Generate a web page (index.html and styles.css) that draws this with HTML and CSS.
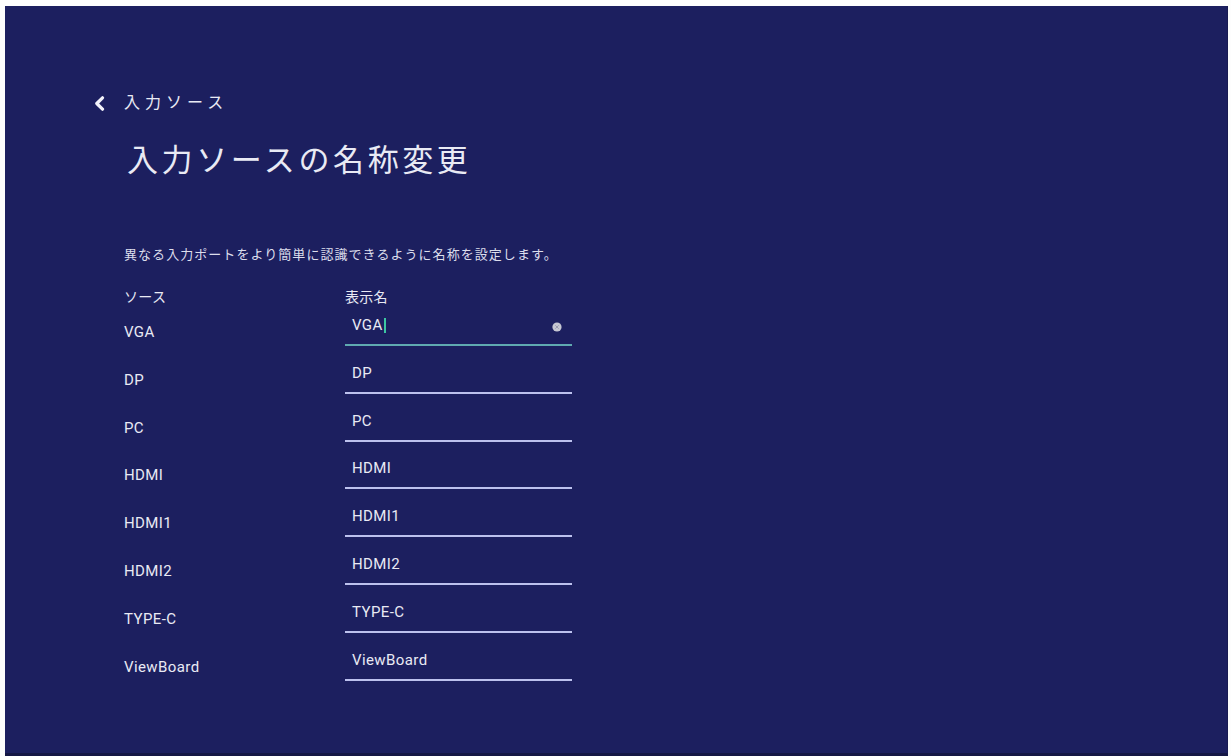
FILE: index.html
```html
<!doctype html>
<html lang="ja">
    <head>
        <meta charset="utf8">
        <link rel="stylesheet" href="styles.css">
    </head>
    <body>
        <main class="screen">
            <div class="back">
                <svg class="chevron" width="11" height="15" viewBox="0 0 11 15">
                    <polyline points="8.5,1.8 2.8,7.5 8.5,13.2" fill="none" stroke="#f2f2fa" stroke-width="3.2" stroke-linecap="round" stroke-linejoin="round"/>
                </svg>
                <span class="back-label">入力ソース</span>
            </div>
            <div class="content">
                <h1 class="title">入力ソースの名称変更</h1>
                <p class="hint">異なる入力ポートをより簡単に認識できるように名称を設定します。</p>
                <div class="head">
                    <span class="col-source">ソース</span>
                    <span>表示名</span>
                </div>
                <ul class="sources">
                    <li class="source">
                        <span class="source-name">VGA</span>
                        <div class="field focused">
                            <span class="value">VGA</span><span class="caret"></span>
                            <svg class="clear" width="10" height="10" viewBox="0 0 10 10">
                                <circle cx="5" cy="5" r="4.6" fill="#c6c7d3"/>
                                <path d="M3.3 3.3 6.7 6.7M6.7 3.3 3.3 6.7" stroke="#9a9bb0" stroke-width="1"/>
                            </svg>
                        </div>
                    </li>
                    <li class="source">
                        <span class="source-name">DP</span>
                        <div class="field"><span class="value">DP</span></div>
                    </li>
                    <li class="source">
                        <span class="source-name">PC</span>
                        <div class="field"><span class="value">PC</span></div>
                    </li>
                    <li class="source">
                        <span class="source-name">HDMI</span>
                        <div class="field"><span class="value">HDMI</span></div>
                    </li>
                    <li class="source">
                        <span class="source-name">HDMI1</span>
                        <div class="field"><span class="value">HDMI1</span></div>
                    </li>
                    <li class="source">
                        <span class="source-name">HDMI2</span>
                        <div class="field"><span class="value">HDMI2</span></div>
                    </li>
                    <li class="source">
                        <span class="source-name">TYPE-C</span>
                        <div class="field"><span class="value">TYPE-C</span></div>
                    </li>
                    <li class="source">
                        <span class="source-name">ViewBoard</span>
                        <div class="field"><span class="value">ViewBoard</span></div>
                    </li>
                </ul>
            </div>
        </main>
    </body>
</html>
```

FILE: styles.css
```css
html {
    height: 100%;
}
body {
    background-color: #fdfdfd;
    box-sizing: border-box;
    color: #e9eaf4;
    font-family: Roboto, "Noto Sans CJK JP", sans-serif;
    height: 100%;
    margin: 0;
    overflow: hidden;
    padding: 6px 3px 0 5px;
}
.screen {
    background-color: #1c1f5f;
    border-bottom: 3px solid #151745;
    border-right: 1px solid #181a52;
    box-sizing: border-box;
    height: 100%;
    padding: 86px 0 0 89px;
}
.back {
    align-items: center;
    display: flex;
    height: 22px;
}
.chevron {
    display: block;
    margin-right: 19px;
}
.back-label {
    font-size: 16px;
    letter-spacing: 5px;
    line-height: 22px;
}
.content {
    padding-left: 30px;
}
.title {
    font-size: 31px;
    font-weight: normal;
    letter-spacing: 3.6px;
    line-height: 46px;
    margin: 24px 0 0;
    padding-left: 3px;
}
.hint {
    color: #dcdeec;
    font-size: 13px;
    letter-spacing: 1.05px;
    line-height: 18px;
    margin: 62px 0 0;
}
.head {
    display: flex;
    font-size: 14px;
    letter-spacing: 0.3px;
    line-height: 18px;
    margin-top: 24px;
}
.col-source {
    width: 221px;
}
.sources {
    display: flex;
    flex-direction: column;
    gap: 7.8px;
    list-style: none;
    margin: 0;
    padding: 0;
}
.source {
    align-items: flex-end;
    display: flex;
    font-size: 15px;
    letter-spacing: 0.4px;
}
.source-name {
    line-height: 18px;
    padding-bottom: 5px;
    width: 221px;
}
.field {
    align-items: center;
    border-bottom: 2px solid #bcc1ee;
    box-sizing: border-box;
    display: flex;
    height: 40px;
    padding: 0 10px 0 7px;
    width: 227px;
}
.field.focused {
    border-bottom-color: #5fa9b0;
}
.value {
    line-height: 18px;
}
.caret {
    background-color: #3dc7a2;
    height: 15px;
    margin-left: 1px;
    width: 2px;
}
.clear {
    display: block;
    margin-left: auto;
    margin-top: 4px;
}
```
